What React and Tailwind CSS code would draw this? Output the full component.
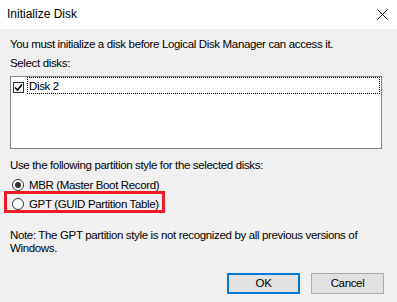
import React, { useState } from 'react';

const CheckBox = ({ checked }) => (
  <div className="w-[11px] h-[11px] border border-[#333333] bg-white flex items-center justify-center shrink-0">
    {checked && (
      <svg width="9" height="9" viewBox="0 0 9 9">
        <path d="M1 4.5 L3.5 7 L8 1.5" fill="none" stroke="#000" strokeWidth="1.6" />
      </svg>
    )}
  </div>
);

const Radio = ({ checked }) => (
  <div className="w-[12px] h-[12px] rounded-full border border-[#333333] bg-white flex items-center justify-center shrink-0">
    {checked && <div className="w-[6px] h-[6px] rounded-full bg-[#333333]" />}
  </div>
);

const InitializeDisk = () => {
  const [style, setStyle] = useState('mbr');

  return (
    <div className="w-[397px] h-[302px] bg-[#f0f0f0] text-black text-[11.5px] tracking-[-0.35px] leading-[13px] font-['Liberation_Sans',Arial,sans-serif] flex flex-col overflow-hidden">
      {/* Title bar */}
      <div className="h-[29px] bg-white flex items-center justify-between pl-[7px] pr-[9px] shrink-0 text-[12px] tracking-normal">
        <span>Initialize Disk</span>
        <svg width="11" height="11" viewBox="0 0 11 11">
          <path d="M0.5 0.5 L10.5 10.5 M10.5 0.5 L0.5 10.5" stroke="#000" strokeWidth="1" />
        </svg>
      </div>

      <div className="flex flex-col px-[10px]">
        <p className="mt-[9px]">You must initialize a disk before Logical Disk Manager can access it.</p>
        <p className="mt-[6px]">Select disks:</p>

        {/* Disk list */}
        <div className="mt-[6px] w-[372px] h-[73px] border border-[#828790] bg-white">
          <div className="flex items-start">
            <div className="ml-[2px] mt-[5px]">
              <CheckBox checked />
            </div>
            <div className="ml-[3px] flex-1 mr-[1px] h-[17px] border border-dotted border-black pl-[1px] pt-[2px]">
              Disk 2
            </div>
          </div>
        </div>

        <p className="mt-[10px]">Use the following partition style for the selected disks:</p>

        <label className="mt-[5px] h-[19px] flex items-start" onClick={() => setStyle('mbr')}>
          <div className="mt-[2px] ml-[2px]">
            <Radio checked={style === 'mbr'} />
          </div>
          <span className="mt-[2px] ml-[5px]">MBR (Master Boot Record)</span>
        </label>

        <label className="relative h-[19px] flex items-start" onClick={() => setStyle('gpt')}>
          <div className="mt-[2px] ml-[2px]">
            <Radio checked={style === 'gpt'} />
          </div>
          <span className="mt-[2px] ml-[5px]">GPT (GUID Partition Table)</span>
          {/* highlight annotation */}
          <div className="absolute left-[-6px] top-[-5px] w-[161px] h-[22px] border-[3px] border-[#ec1c24] pointer-events-none" />
        </label>

        <p className="mt-[14px] w-[370px]">
          Note: The GPT partition style is not recognized by all previous versions of Windows.
        </p>
      </div>

      {/* Buttons */}
      <div className="mt-[18px] flex justify-end gap-[11px] pr-[13px]">
        <button className="w-[73px] h-[21px] bg-[#e1e1e1] border-2 border-[#0078d7] flex items-center justify-center">
          OK
        </button>
        <button className="w-[73px] h-[21px] bg-[#e1e1e1] border border-[#adadad] flex items-center justify-center">
          Cancel
        </button>
      </div>
    </div>
  );
};

export default function App() {
  return <InitializeDisk />;
}
